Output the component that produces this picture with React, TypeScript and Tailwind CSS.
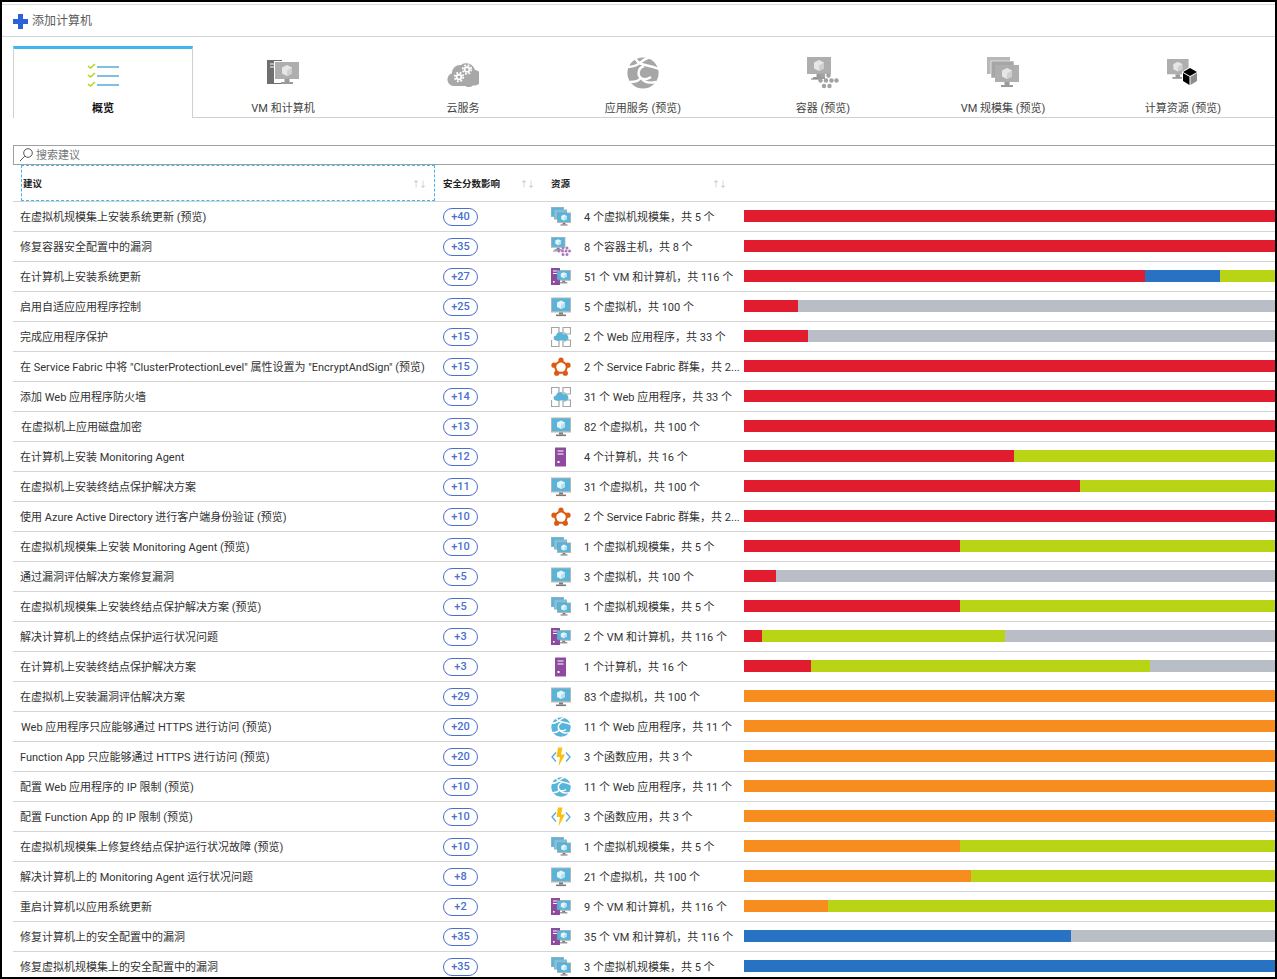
const RED = "#e01c2e";
const ORANGE = "#f78d1e";
const GREEN = "#b8d414";
const BLUE = "#2872c4";
const GRAY = "#b9bdc6";

type Seg = [string, number];
type Row = { name: string; pad?: string; score: string; icon: keyof typeof icons; res: string; bar: Seg[] };

function Monitor({ x = 0, y = 0, s = 1, fill = "#59b4d9", base = "#7a7a7a" }) {
  return (
    <g transform={`translate(${x} ${y}) scale(${s})`}>
      <rect x="0" y="0" width="20" height="15" fill={base} opacity="0.55" />
      <rect x="1" y="1" width="18" height="12.5" fill={fill} />
      <path d="M10 3l4 2v4.5l-4 2-4-2V5z" fill="#fff" opacity="0.85" />
      <path d="M10 7.5l4-2.5v4.5l-4 2z" fill="#b8e0f0" />
      <rect x="8" y="15" width="4" height="2" fill={base} />
      <rect x="5" y="17" width="10" height="1.6" fill={base} />
    </g>
  );
}

// same swoosh for the tab icon and the small row icon
function GlobeShape({ fill }: { fill: string }) {
  return (
    <svg x="0" y="0" width="32" height="32" viewBox="0 0 32 32">
      <circle cx="16" cy="16" r="15.6" fill={fill} />
      <g fill="none" stroke="#fff" strokeWidth="2.4">
        <path d="M0 10C6 10 11 8 14 5S20 1 23 0" />
        <path d="M8 0C9 5 13 7 18 8S27 10 32 12" />
        <path d="M17 9C11 11 10 18 14 21C17 23 21 22 24 20" />
        <path d="M14 21C11 24 9 25 3 25" />
        <path d="M15 22C18 26 24 26 29 25" />
      </g>
    </svg>
  );
}

const icons = {
  vm: (
    <svg viewBox="0 0 20 20" className="h-5 w-5">
      <Monitor y={0.5} />
    </svg>
  ),
  vmss: (
    <svg viewBox="0 0 20 20" className="h-5 w-5">
      <rect x="0" y="0" width="13" height="10" fill="#8cb4c8" />
      <rect x="1" y="1" width="11" height="8" fill="#59b4d9" />
      <rect x="3" y="2.5" width="13" height="10" fill="#8cb4c8" />
      <rect x="4" y="3.5" width="11" height="8" fill="#7cc4e2" />
      <Monitor x={6} y={5.5} s={0.7} />
    </svg>
  ),
  container: (
    <svg viewBox="0 0 20 20" className="h-5 w-5">
      <Monitor s={0.72} />
      <path d="M2 14h6" stroke="#8a8a8a" strokeWidth="1" />
      <g fill="#a979bd">
        <circle cx="8" cy="14" r="1.5" />
        <circle cx="12" cy="11" r="1.5" />
        <circle cx="16" cy="11" r="1.5" />
        <circle cx="11.5" cy="14" r="1.5" />
        <circle cx="15" cy="14" r="1.5" />
        <circle cx="18.5" cy="14" r="1.5" />
        <circle cx="12" cy="17.5" r="1.5" />
        <circle cx="16" cy="17.5" r="1.5" />
      </g>
    </svg>
  ),
  machine: (
    <svg viewBox="0 0 20 20" className="h-5 w-5">
      <rect x="0" y="1" width="9" height="17" fill="#8e4a9e" />
      <path d="M2 4h6M2 6.5h6" stroke="#fff" strokeWidth="1" />
      <rect x="2" y="14" width="1.6" height="1.6" fill="#fff" />
      <Monitor x={5.5} y={3} s={0.72} />
    </svg>
  ),
  server: (
    <svg viewBox="0 0 20 20" className="h-5 w-5">
      <rect x="4" y="0.5" width="11" height="19" rx="0.5" fill="#8e4a9e" />
      <path d="M6.5 4h6M6.5 7h6" stroke="#fff" strokeWidth="1.1" />
      <rect x="6.5" y="14" width="2" height="2" fill="#fff" />
    </svg>
  ),
  webapp: (
    <svg viewBox="0 0 20 20" className="h-5 w-5">
      <path
        d="M0.5 7V0.5H8v6H6M12 0.5h7.5V7H14V6h-2zM0.5 13v6.5H8v-6H6M12 19.5h7.5V13H14v1h-2z"
        fill="none"
        stroke="#a5a5a5"
        strokeWidth="1.2"
      />
      <path d="M4.5 13.5a2.6 2.6 0 0 1 .6-5.1 4 4 0 0 1 7.6-.9 3.2 3.2 0 0 1 2.7 6z" fill="#59b4d9" />
    </svg>
  ),
  fabric: (
    <svg viewBox="0 0 20 20" className="h-5 w-5">
      <path d="M10 3.5l6.5 4.7-2.5 7.6H6L3.5 8.2z" fill="none" stroke="#dd5a12" strokeWidth="2" />
      <g fill="#dd5a12">
        <circle cx="10" cy="3" r="2.6" />
        <circle cx="17" cy="8.2" r="2.6" />
        <circle cx="14.3" cy="16.2" r="2.6" />
        <circle cx="5.7" cy="16.2" r="2.6" />
        <circle cx="3" cy="8.2" r="2.6" />
      </g>
    </svg>
  ),
  globe: (
    <svg viewBox="0 0 32 32" className="h-5 w-5">
      <GlobeShape fill="#59b4d9" />
    </svg>
  ),
  func: (
    <svg viewBox="0 0 20 20" className="h-5 w-5">
      <path d="M5 5.5L1 10l4 4.5M15 5.5l4 4.5-4 4.5" fill="none" stroke="#59a8d9" strokeWidth="1.3" />
      <path d="M11.5 0.5H7L5.5 10H9L7.5 19.5l6.5-12h-4z" fill="#fcc10f" />
    </svg>
  ),
};

const rows: Row[] = [
  { name: "在虚拟机规模集上安装系统更新 (预览)", score: "+40", icon: "vmss", res: "4 个虚拟机规模集，共 5 个", bar: [[RED, 1]] },
  { name: "修复容器安全配置中的漏洞", score: "+35", icon: "container", res: "8 个容器主机，共 8 个", bar: [[RED, 1]] },
  { name: "在计算机上安装系统更新", score: "+27", icon: "machine", res: "51 个 VM 和计算机，共 116 个", bar: [[RED, 401], [BLUE, 75], [GREEN, 55]] },
  { name: "启用自适应应用程序控制", score: "+25", icon: "vm", res: "5 个虚拟机，共 100 个", bar: [[RED, 54], [GRAY, 477]] },
  { name: "完成应用程序保护", score: "+15", icon: "webapp", res: "2 个 Web 应用程序，共 33 个", bar: [[RED, 64], [GRAY, 467]] },
  { name: "在 Service Fabric 中将 \"ClusterProtectionLevel\" 属性设置为 \"EncryptAndSign\" (预览)", score: "+15", icon: "fabric", res: "2 个 Service Fabric 群集，共 2...", bar: [[RED, 1]] },
  { name: "添加 Web 应用程序防火墙", score: "+14", icon: "webapp", res: "31 个 Web 应用程序，共 33 个", bar: [[RED, 1]] },
  { name: "在虚拟机上应用磁盘加密", pad: "pl-[8px]", score: "+13", icon: "vm", res: "82 个虚拟机，共 100 个", bar: [[RED, 1]] },
  { name: "在计算机上安装 Monitoring Agent", score: "+12", icon: "server", res: "4 个计算机，共 16 个", bar: [[RED, 270], [GREEN, 261]] },
  { name: "在虚拟机上安装终结点保护解决方案", score: "+11", icon: "vm", res: "31 个虚拟机，共 100 个", bar: [[RED, 336], [GREEN, 195]] },
  { name: "使用 Azure Active Directory 进行客户端身份验证 (预览)", score: "+10", icon: "fabric", res: "2 个 Service Fabric 群集，共 2...", bar: [[RED, 1]] },
  { name: "在虚拟机规模集上安装 Monitoring Agent (预览)", score: "+10", icon: "vmss", res: "1 个虚拟机规模集，共 5 个", bar: [[RED, 216], [GREEN, 315]] },
  { name: "通过漏洞评估解决方案修复漏洞", score: "+5", icon: "vm", res: "3 个虚拟机，共 100 个", bar: [[RED, 32], [GRAY, 499]] },
  { name: "在虚拟机规模集上安装终结点保护解决方案 (预览)", score: "+5", icon: "vmss", res: "1 个虚拟机规模集，共 5 个", bar: [[RED, 216], [GREEN, 315]] },
  { name: "解决计算机上的终结点保护运行状况问题", score: "+3", icon: "machine", res: "2 个 VM 和计算机，共 116 个", bar: [[RED, 18], [GREEN, 243], [GRAY, 270]] },
  { name: "在计算机上安装终结点保护解决方案", score: "+3", icon: "server", res: "1 个计算机，共 16 个", bar: [[RED, 67], [GREEN, 339], [GRAY, 125]] },
  { name: "在虚拟机上安装漏洞评估解决方案", score: "+29", icon: "vm", res: "83 个虚拟机，共 100 个", bar: [[ORANGE, 1]] },
  { name: "Web 应用程序只应能够通过 HTTPS 进行访问 (预览)", pad: "pl-[8px]", score: "+20", icon: "globe", res: "11 个 Web 应用程序，共 11 个", bar: [[ORANGE, 1]] },
  { name: "Function App 只应能够通过 HTTPS 进行访问 (预览)", score: "+20", icon: "func", res: "3 个函数应用，共 3 个", bar: [[ORANGE, 1]] },
  { name: "配置 Web 应用程序的 IP 限制 (预览)", score: "+10", icon: "globe", res: "11 个 Web 应用程序，共 11 个", bar: [[ORANGE, 1]] },
  { name: "配置 Function App 的 IP 限制 (预览)", score: "+10", icon: "func", res: "3 个函数应用，共 3 个", bar: [[ORANGE, 1]] },
  { name: "在虚拟机规模集上修复终结点保护运行状况故障 (预览)", score: "+10", icon: "vmss", res: "1 个虚拟机规模集，共 5 个", bar: [[ORANGE, 216], [GREEN, 315]] },
  { name: "解决计算机上的 Monitoring Agent 运行状况问题", score: "+8", icon: "vm", res: "21 个虚拟机，共 100 个", bar: [[ORANGE, 227], [GREEN, 304]] },
  { name: "重启计算机以应用系统更新", score: "+2", icon: "machine", res: "9 个 VM 和计算机，共 116 个", bar: [[ORANGE, 84], [GREEN, 447]] },
  { name: "修复计算机上的安全配置中的漏洞", score: "+35", icon: "machine", res: "35 个 VM 和计算机，共 116 个", bar: [[BLUE, 327], [GRAY, 204]] },
  { name: "修复虚拟机规模集上的安全配置中的漏洞", score: "+35", icon: "vmss", res: "3 个虚拟机规模集，共 5 个", bar: [[BLUE, 1]] },
];

const tabs = [
  { label: "VM 和计算机", icon: <TabVm /> },
  { label: "云服务", icon: <TabCloud /> },
  { label: "应用服务 (预览)", icon: <TabGlobe /> },
  { label: "容器 (预览)", icon: <TabContainer /> },
  { label: "VM 规模集 (预览)", icon: <TabVmss /> },
  { label: "计算资源 (预览)", icon: <TabCompute /> },
];

function GrayMonitor({ x = 0, y = 0, s = 1 }) {
  return (
    <g transform={`translate(${x} ${y}) scale(${s})`}>
      <rect width="24" height="17" fill="#aeaeae" />
      <path d="M12 3l5 2.5v6L12 14l-5-2.5v-6z" fill="#e6e6e6" />
      <path d="M12 8.5l5-3v6L12 14z" fill="#cfcfcf" />
      <rect x="9.5" y="17" width="5" height="3" fill="#9a9a9a" />
      <rect x="6" y="20" width="12" height="2" fill="#9a9a9a" />
    </g>
  );
}

function TabVm() {
  return (
    <svg viewBox="0 0 32 25" className="h-[25px] w-8">
      <rect width="15" height="24" fill="#6f6f6f" />
      <path d="M3 4h10M3 7h10" stroke="#fff" strokeWidth="1.2" />
      <rect x="7" y="1" width="25" height="22" fill="#fff" />
      <GrayMonitor x={8} y={2} />
    </svg>
  );
}

function Gear({ x, y }: { x: number; y: number }) {
  return (
    <g transform={`translate(${x} ${y})`} fill="none" stroke="#fff">
      <circle r="2.4" strokeWidth="1.8" />
      <circle r="4.3" strokeWidth="1.8" strokeDasharray="1.8 1.6" />
    </g>
  );
}

function TabCloud() {
  return (
    <svg viewBox="0 0 32 28" className="h-7 w-8">
      <path d="M7 27a6.5 6.5 0 0 1-2-12.7A8 8 0 0 1 14 6a9 9 0 0 1 14 5 7.5 7.5 0 0 1-2 15.5 7 7 0 0 1-8 .5z" fill="#a8a8a8" />
      <Gear x={20} y={10.5} />
      <Gear x={12} y={18} />
    </svg>
  );
}

function TabGlobe() {
  return (
    <svg viewBox="0 0 32 32" className="h-8 w-8">
      <GlobeShape fill="#a6a6a6" />
    </svg>
  );
}

function TabContainer() {
  return (
    <svg viewBox="0 0 32 32" className="h-8 w-8">
      <GrayMonitor />
      <path d="M4 22h10" stroke="#8a8a8a" strokeWidth="1.2" />
      <g fill="#a2a2a2">
        <circle cx="16" cy="18.5" r="2.2" />
        <circle cx="21.5" cy="18.5" r="2.2" />
        <circle cx="13.5" cy="23.5" r="2.2" />
        <circle cx="19" cy="23.5" r="2.2" />
        <circle cx="24.5" cy="23.5" r="2.2" />
        <circle cx="29.5" cy="23.5" r="2.2" />
        <circle cx="17" cy="29" r="2.2" />
        <circle cx="22.5" cy="29" r="2.2" />
      </g>
    </svg>
  );
}

function TabVmss() {
  return (
    <svg viewBox="0 0 32 32" className="h-8 w-8">
      <rect width="23" height="17" fill="#b8b8b8" />
      <rect x="4" y="4" width="23" height="17" fill="#a6a6a6" stroke="#fff" strokeWidth="0.6" />
      <GrayMonitor x={8} y={8} />
    </svg>
  );
}

function TabCompute() {
  return (
    <svg viewBox="0 0 32 27" className="h-[27px] w-8">
      <GrayMonitor s={0.9} />
      <path d="M23 8l8 4.5v9.5L23 27l-8-5V12.5z" fill="#fff" />
      <path d="M23 9l7 4-7 4-7-4z" fill="#000" />
      <path d="M16 14l6.5 3.8V26L16 22z" fill="#000" />
      <path d="M30 14l-6.5 3.8V26l6.5-4z" fill="#8c8c8c" />
    </svg>
  );
}

function SortArrows() {
  return <span className="text-[8px] font-normal leading-none tracking-[-1px] text-[#bdbdbd]">↑↓</span>;
}

export default function App() {
  return (
    <div
      className="h-[979px] w-[1277px] overflow-hidden border-2 border-black bg-white text-[11px] text-[#333]"
      style={{ fontFamily: 'Roboto, "Noto Sans CJK SC", sans-serif' }}
    >
      {/* toolbar */}
      <div className="mt-[2px] flex h-[33px] items-center gap-1 border-y border-[#d4d4d4] border-t-[#dcdcdc] pt-[1px] pl-[11px] text-xs text-[#5a5a5a]">
        <svg viewBox="0 0 15 15" className="h-[15px] w-[15px]">
          <path d="M5 0h5v5h5v5h-5v5H5v-5H0V5h5z" fill="#2b62d9" />
        </svg>
        添加计算机
      </div>

      {/* tabs */}
      <div className="mt-[9px] flex h-[72px] pl-[11px]">
        <div className="flex w-[180px] flex-col items-center border-x border-t-[3px] border-[#d0d0d0] border-t-[#41b6ec] pt-[14px]">
          <svg viewBox="0 0 32 26" className="h-[26px] w-8">
            <g fill="none" stroke="#b8d414" strokeWidth="1.5">
              <path d="M1 3l2.5 2L8 1M1 12l2.5 2L8 10M1 21l2.5 2L8 19" />
            </g>
            <g stroke="#7fc0e0" strokeWidth="2">
              <path d="M10 4h22M10 13h22M10 22h22" />
            </g>
          </svg>
          <span className="mt-[12px] font-semibold text-[#111]">概览</span>
        </div>
        <div className="flex flex-1 border-b border-[#d0d0d0]">
          {tabs.map((t) => (
            <div key={t.label} className="flex w-[180px] shrink-0 flex-col items-center pt-[11px]">
              <div className="flex h-8 items-center">{t.icon}</div>
              <span className="mt-[12px] text-[#444]">{t.label}</span>
            </div>
          ))}
        </div>
      </div>

      {/* search */}
      <div className="mt-[27px] ml-[11px] flex h-5 items-center gap-[3px] border border-r-0 border-[#a0a0a0] pl-[5px] text-[#777]">
        <svg viewBox="0 0 14 14" className="h-[14px] w-[14px]" fill="none" stroke="#555" strokeWidth="1">
          <circle cx="9" cy="5" r="4.3" />
          <path d="M5.8 8.2L1 13" />
        </svg>
        <span className="pt-[2px]">搜索建议</span>
      </div>

      {/* table head */}
      <div className="ml-[11px] flex h-[37px] items-center border-b border-[#d4d4d4] text-[9.5px] font-semibold text-[#222]">
        <div className="ml-2 flex h-full w-[414px] items-center justify-between border border-dashed border-[#41b6ec] pt-[3px] pl-[1px] pr-[8px]">
          建议
          <SortArrows />
        </div>
        <div className="flex w-[116px] items-center justify-between pt-[3px] pl-2 pr-[17px]">
          安全分数影响
          <SortArrows />
        </div>
        <div className="flex w-[176px] items-center justify-between pt-[3px] pr-[1px]">
          资源
          <SortArrows />
        </div>
      </div>

      {/* rows */}
      {rows.map((r, i) => (
        <div key={i} className="ml-[11px] flex h-[30px] items-center border-b border-[#d4d4d4]">
          <div className={`w-[430px] shrink-0 whitespace-nowrap pt-[4px] ${r.pad ?? "pl-[7px]"} text-[#333]`}>{r.name}</div>
          <div className="w-[108px] shrink-0">
            <span className="flex h-[18px] w-[35px] items-center justify-center rounded-full border border-[#4a6fd0] pt-[2px] text-[11px] font-medium text-[#4a6fd0]">
              {r.score}
            </span>
          </div>
          <div className="w-[33px] shrink-0">{icons[r.icon]}</div>
          <div className="w-[160px] shrink-0 whitespace-nowrap pt-[4px] text-[#333]">{r.res}</div>
          <div className="-mt-[1px] flex h-3 flex-1">
            {r.bar.map(([color, n], j) => (
              <div key={j} style={{ backgroundColor: color, flexGrow: n, flexBasis: 0 }} />
            ))}
          </div>
        </div>
      ))}
    </div>
  );
}
